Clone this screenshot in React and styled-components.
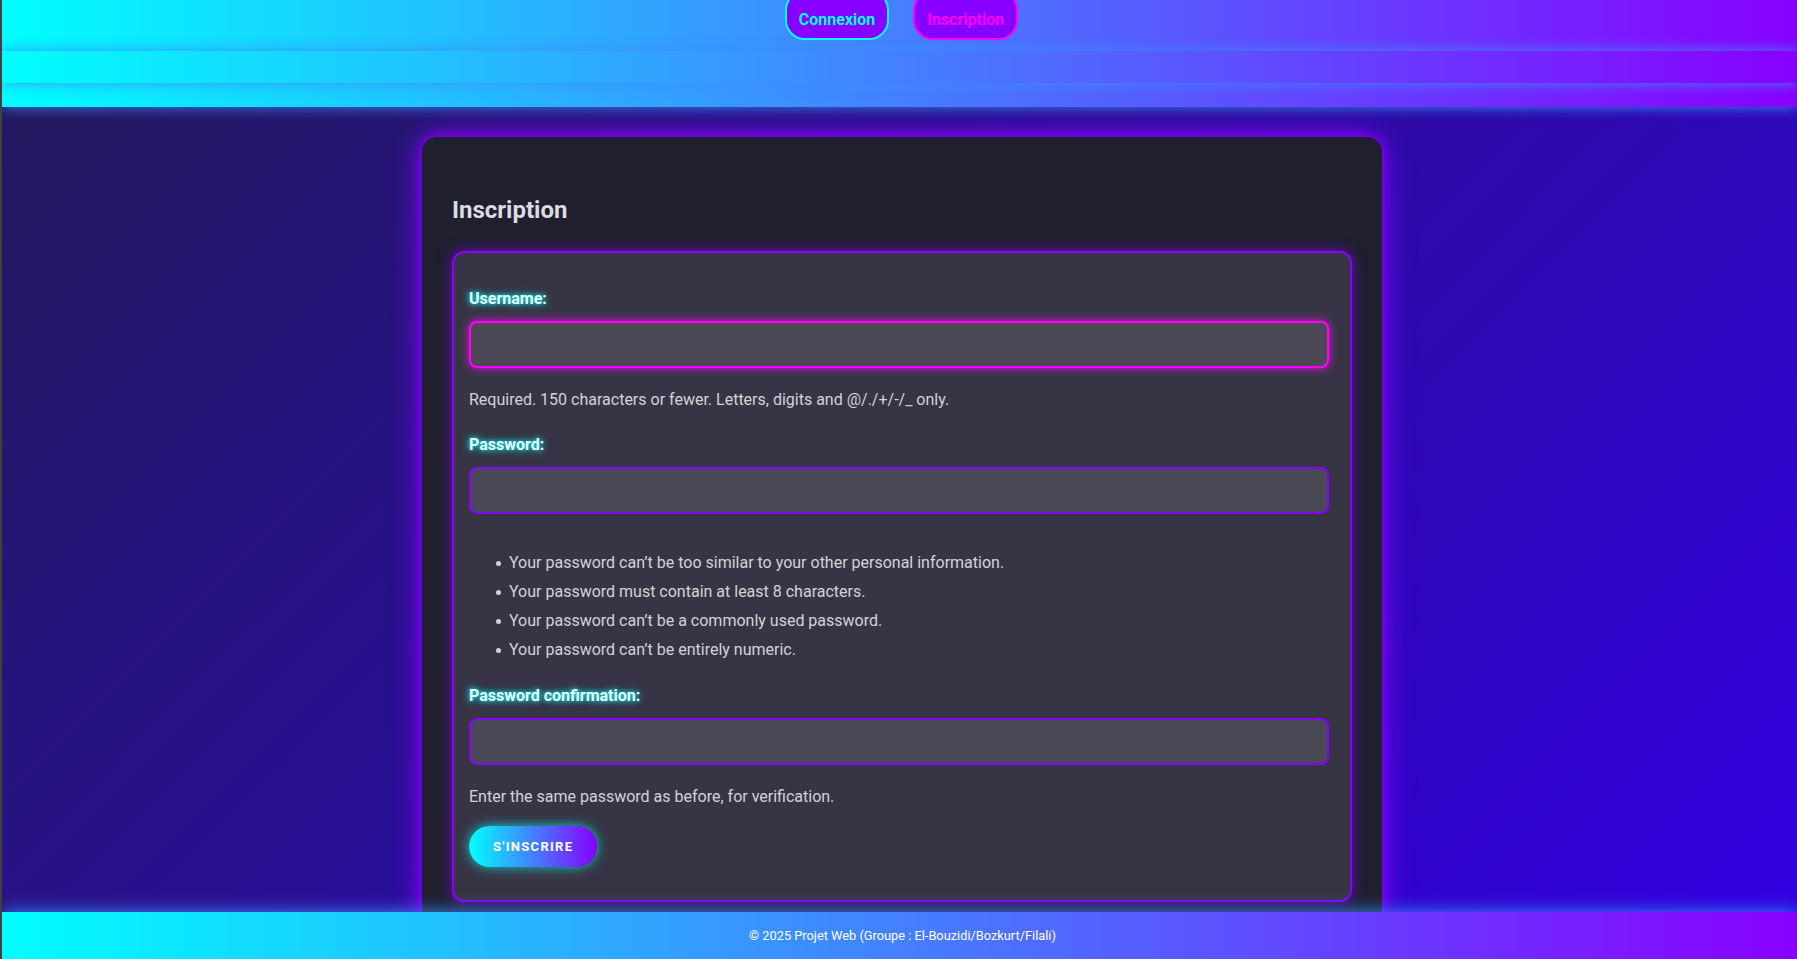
import React from 'react';
import styled, { createGlobalStyle } from 'styled-components';

const neon = 'linear-gradient(90deg, #00ffff 0%, #8800ff 100%)';
const glow = '0 0 14px rgba(60, 140, 255, 0.95)';

const GlobalStyle = createGlobalStyle`
  html, body {
    margin: 0;
    height: 100%;
    overflow: hidden;
  }
  body {
    font-family: Roboto, "Liberation Sans", sans-serif;
    background: #3d3d3d;
  }
`;

const Page = styled.div`
  height: 100vh;
  display: flex;
  flex-direction: column;
  border-left: 2px solid #3f3f44;
  background: linear-gradient(135deg, #221a58 0%, #3300e4 100%);
  overflow: hidden;
`;

const Header = styled.header`
  height: 51px;
  flex-shrink: 0;
  display: flex;
  justify-content: center;
  gap: 24px;
  padding-left: 4px;
  background: ${neon};
  position: relative;
  z-index: 1;
`;

const NavLink = styled.a`
  height: 50px;
  margin-top: -10px;
  box-sizing: border-box;
  display: flex;
  align-items: flex-end;
  padding: 0 12px 9px;
  border-radius: 20px;
  background: #8800ff;
  border: 2px solid ${p => p.$color};
  color: ${p => p.$color};
  font-size: 16px;
  font-weight: 700;
  line-height: 19px;
  text-decoration: none;
  cursor: pointer;
`;

const Stripe = styled.div`
  height: ${p => p.$h}px;
  flex-shrink: 0;
  background: ${neon};
  box-shadow: ${glow};
  position: relative;
  z-index: ${p => p.$z};
`;

const Main = styled.main`
  flex: 1;
  min-height: 0;
  overflow: hidden;
  display: flex;
  justify-content: center;
  align-items: flex-start;
  padding: 30px 0 0 5px;
  position: relative;
  z-index: 0;
`;

const Card = styled.section`
  width: 960px;
  flex-shrink: 0;
  box-sizing: border-box;
  padding: 30px;
  background: #1f1f2e;
  border-radius: 15px;
  box-shadow: 0 0 12px #8800ff, 0 0 30px #8800ff;
`;

const Title = styled.h2`
  margin: 29px 0 27px;
  font-size: 24px;
  line-height: 28px;
  font-weight: 700;
  color: #dcdce2;
`;

const Form = styled.form`
  padding: 36px 15px 33px;
  background: #373545;
  border: 2px solid #8800ff;
  border-radius: 12px;
  box-shadow: 0 0 14px rgba(136, 0, 255, 0.7);
`;

const Label = styled.label`
  display: block;
  margin: ${p => p.$top || 0}px 0 13px;
  font-size: 16px;
  line-height: 19px;
  font-weight: 700;
  color: #e6ffff;
  text-shadow: 0 0 5px #00ffff, 0 0 8px rgba(0, 255, 255, 0.6);
`;

const Input = styled.input`
  display: block;
  width: calc(100% - 6px);
  height: 47px;
  box-sizing: border-box;
  padding: 0 12px;
  background: #4a4955;
  border: 2px solid ${p => (p.$focused ? '#ff00ff' : '#8800ff')};
  border-radius: 8px;
  box-shadow: ${p => (p.$focused ? '0 0 8px #ff00ff' : 'none')};
  color: #fff;
  font: inherit;
  outline: none;
`;

const Help = styled.div`
  margin-top: 22px;
  font-size: 16px;
  line-height: 19px;
  color: #d2d2d8;
`;

const Rules = styled.ul`
  margin: 39px 0 0;
  padding-left: 40px;
  list-style: none;
  font-size: 16px;
  line-height: 19px;
  color: #d2d2d8;

  li {
    position: relative;
  }

  li::before {
    content: '';
    position: absolute;
    left: -13px;
    top: 8px;
    width: 5px;
    height: 5px;
    border-radius: 50%;
    background: #d2d2d8;
  }

  li + li {
    margin-top: 10px;
  }
`;

const Submit = styled.button`
  margin-top: 20px;
  height: 41px;
  padding: 0 24px;
  border: none;
  border-radius: 21px;
  background: ${neon};
  box-shadow: 0 0 12px rgba(0, 255, 255, 0.75);
  color: #fff;
  font-family: Roboto, "Liberation Sans", sans-serif;
  font-size: 13px;
  font-weight: 700;
  letter-spacing: 1.3px;
  cursor: pointer;
`;

const Footer = styled.footer`
  height: 47px;
  flex-shrink: 0;
  display: flex;
  align-items: center;
  justify-content: center;
  padding-left: 6px;
  background: ${neon};
  box-shadow: 0 0 18px rgba(60, 140, 255, 0.95);
  color: #fff;
  font-size: 12.8px;
  position: relative;
  z-index: 3;
`;

const rules = [
  'Your password can\u2019t be too similar to your other personal information.',
  'Your password must contain at least 8 characters.',
  'Your password can\u2019t be a commonly used password.',
  'Your password can\u2019t be entirely numeric.',
];

export default function App() {
  return (
    <>
      <GlobalStyle />
      <Page>
        <Header>
          <NavLink $color="#00ffff">Connexion</NavLink>
          <NavLink $color="#ff00ff">Inscription</NavLink>
        </Header>
        <Stripe $h={32} $z={3} />
        <Stripe $h={24} $z={2} />

        <Main>
          <Card>
            <Title>Inscription</Title>
            <Form onSubmit={e => e.preventDefault()}>
              <Label htmlFor="id_username">Username:</Label>
              <Input id="id_username" type="text" $focused />
              <Help>Required. 150 characters or fewer. Letters, digits and @/./+/-/_ only.</Help>

              <Label htmlFor="id_password1" $top={26}>Password:</Label>
              <Input id="id_password1" type="password" />
              <Rules>
                {rules.map(r => (
                  <li key={r}>{r}</li>
                ))}
              </Rules>

              <Label htmlFor="id_password2" $top={27}>Password confirmation:</Label>
              <Input id="id_password2" type="password" />
              <Help>Enter the same password as before, for verification.</Help>

              <Submit type="submit">S'INSCRIRE</Submit>
            </Form>
          </Card>
        </Main>

        <Footer>© 2025 Projet Web (Groupe : El-Bouzidi/Bozkurt/Filali)</Footer>
      </Page>
    </>
  );
}
